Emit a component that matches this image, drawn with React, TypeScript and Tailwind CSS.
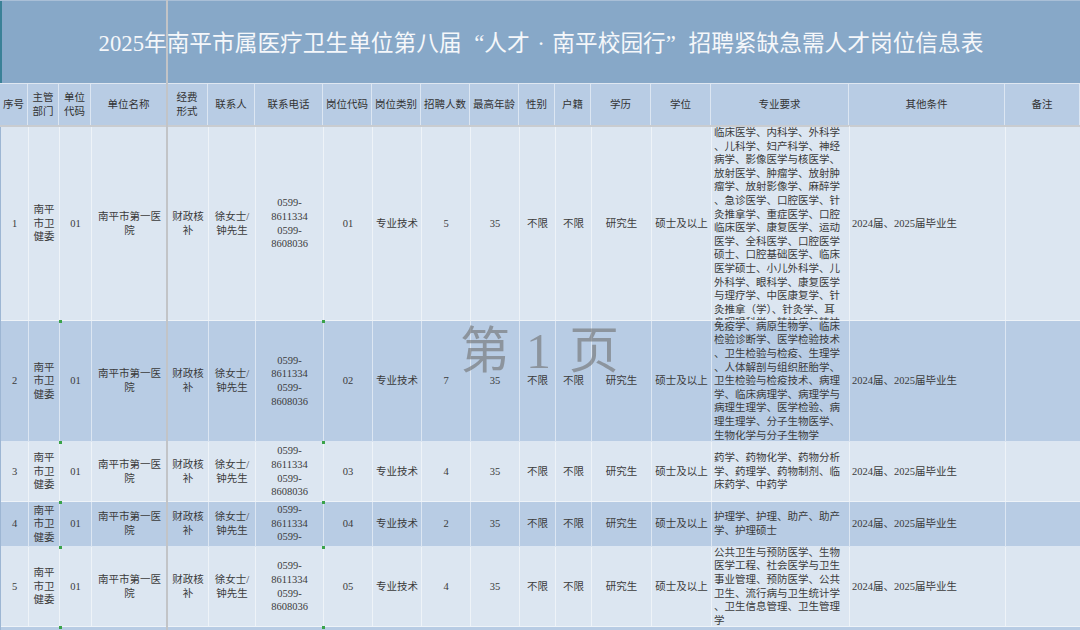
import React from 'react'

const FONT = { fontFamily: '"Liberation Serif", "Noto Sans CJK SC", serif' }

const COLS =
  'grid grid-cols-[28px_31px_32px_76px_41px_47px_68px_49px_49px_49px_49px_36px_36px_60px_60px_138px_156px_75px]'

type CellProps = {
  lines: string[]
  left?: boolean
  top?: boolean
  className?: string
}

function Cell({ lines, left, top, className = '' }: CellProps) {
  return (
    <div
      className={`flex flex-col overflow-hidden border-r border-white/50 leading-[13.6px] ${
        top ? 'justify-start' : 'justify-center'
      } ${left ? 'items-start pl-[2px]' : 'items-center'} ${className}`}
    >
      {lines.map((l, i) => (
        <div key={i} className="whitespace-nowrap shrink-0">
          {l}
        </div>
      ))}
    </div>
  )
}

const headers: string[][] = [
  ['序号'],
  ['主管', '部门'],
  ['单位', '代码'],
  ['单位名称'],
  ['经费', '形式'],
  ['联系人'],
  ['联系电话'],
  ['岗位代码'],
  ['岗位类别'],
  ['招聘人数'],
  ['最高年龄'],
  ['性别'],
  ['户籍'],
  ['学历'],
  ['学位'],
  ['专业要求'],
  ['其他条件'],
  ['备注'],
]

type Row = {
  no: string
  code: string
  count: string
  h: string
  bg: string
  majors: string[]
  majorsTop?: boolean
  phoneTop?: boolean
}

const rows: Row[] = [
  {
    no: '1',
    code: '01',
    count: '5',
    h: 'h-[194px]',
    bg: 'bg-[#dce6f1]',
    majorsTop: true,
    majors: [
      '临床医学、内科学、外科学',
      '、儿科学、妇产科学、神经',
      '病学、影像医学与核医学、',
      '放射医学、肿瘤学、放射肿',
      '瘤学、放射影像学、麻醉学',
      '、急诊医学、口腔医学、针',
      '灸推拿学、重症医学、口腔',
      '临床医学、康复医学、运动',
      '医学、全科医学、口腔医学',
      '硕士、口腔基础医学、临床',
      '医学硕士、小儿外科学、儿',
      '外科学、眼科学、康复医学',
      '与理疗学、中医康复学、针',
      '灸推拿（学）、针灸学、耳',
      '鼻咽喉科学、精神病与精神',
    ],
  },
  {
    no: '2',
    code: '02',
    count: '7',
    h: 'h-[121px]',
    bg: 'bg-[#b8cce4]',
    majors: [
      '免疫学、病原生物学、临床',
      '检验诊断学、医学检验技术',
      '、卫生检验与检疫、生理学',
      '、人体解剖与组织胚胎学、',
      '卫生检验与检疫技术、病理',
      '学、临床病理学、病理学与',
      '病理生理学、医学检验、病',
      '理生理学、分子生物医学、',
      '生物化学与分子生物学',
    ],
  },
  {
    no: '3',
    code: '03',
    count: '4',
    h: 'h-[60px]',
    bg: 'bg-[#dce6f1]',
    majors: ['药学、药物化学、药物分析', '学、药理学、药物制剂、临', '床药学、中药学'],
  },
  {
    no: '4',
    code: '04',
    count: '2',
    h: 'h-[45px]',
    bg: 'bg-[#b8cce4]',
    phoneTop: true,
    majors: ['护理学、护理、助产、助产', '学、护理硕士'],
  },
  {
    no: '5',
    code: '05',
    count: '4',
    h: 'h-[80px]',
    bg: 'bg-[#dce6f1]',
    majors: [
      '公共卫生与预防医学、生物',
      '医学工程、社会医学与卫生',
      '事业管理、预防医学、公共',
      '卫生、流行病与卫生统计学',
      '、卫生信息管理、卫生管理',
      '学',
    ],
  },
]

function DataRow({ r }: { r: Row }) {
  return (
    <div className={`${COLS} ${r.h} ${r.bg} border-b border-white/50`}>
      <Cell lines={[r.no]} />
      <Cell lines={['南平', '市卫', '健委']} />
      <Cell lines={['01']} />
      <Cell lines={['南平市第一医', '院']} />
      <Cell lines={['财政核', '补']} />
      <Cell lines={['徐女士/', '钟先生']} />
      <Cell lines={['0599-', '8611334', '0599-', '8608036']} top={r.phoneTop} className={r.phoneTop ? 'pt-[1px]' : ''} />
      <Cell lines={[r.code]} />
      <Cell lines={['专业技术']} />
      <Cell lines={[r.count]} />
      <Cell lines={['35']} />
      <Cell lines={['不限']} />
      <Cell lines={['不限']} />
      <Cell lines={['研究生']} />
      <Cell lines={['硕士及以上']} />
      <Cell lines={r.majors} left top={r.majorsTop} className={r.majorsTop ? '-mt-[1px]' : ''} />
      <Cell lines={['2024届、2025届毕业生']} left />
      <Cell lines={['']} />
    </div>
  )
}

// little green cell-corner marks seen along a few column edges
const marks = [
  [59, 320],
  [322, 320],
  [59, 441],
  [322, 441],
  [59, 501],
  [322, 501],
  [59, 546],
  [322, 546],
  [59, 626],
  [322, 626],
]

export default function App() {
  return (
    <div
      className="relative w-[1080px] h-[630px] overflow-hidden bg-[#dce6f1] text-[10.5px] text-[#3b3b3b]"
      style={FONT}
    >
      <div className="h-px bg-[#a9bfd7]" />
      <div className="h-[82px] bg-[#87a8c8] border-l-2 border-[#3a8197] flex items-center justify-center">
        <h1 className="text-[22.7px] text-[#f5f7fa] font-normal pt-[5px] whitespace-nowrap">
          2025年南平市属医疗卫生单位第八届
          <span className="inline-block w-[1em] text-right">“</span>人才
          <span className="inline-block w-[1em] text-center">·</span>南平校园行
          <span className="inline-block w-[1em] text-left">”</span>
          招聘紧缺急需人才岗位信息表
        </h1>
      </div>
      <div className="h-px bg-[#dfe7f1]" />
      <div className={`${COLS} h-[41px] bg-[#b8cce4] text-[#333]`}>
        {headers.map((h, i) => (
          <Cell key={i} lines={h} />
        ))}
      </div>
      <div className="h-[2px] bg-[#c9ccd0]" />
      <div className="border-l border-[#9db6d3]">
        {rows.map((r) => (
          <DataRow key={r.no} r={r} />
        ))}
        <div className="h-[20px] bg-[#b8cce4]" />
      </div>

      {/* page break line */}
      <div className="absolute left-[166px] top-0 h-full w-[2px] bg-[#c2c4c7]" />

      {marks.map(([x, y], i) => (
        <div key={i} className="absolute w-[3px] h-[3px] bg-[#3aa34a]" style={{ left: x, top: y }} />
      ))}

      {/* watermark */}
      <div className="absolute left-[460px] top-[326px] flex items-baseline text-[50px] leading-none text-[#6e6e6e]/60 pointer-events-none">
        <span>第</span>
        <span className="ml-[16px]">1</span>
        <span className="ml-[18px]">页</span>
      </div>
    </div>
  )
}
